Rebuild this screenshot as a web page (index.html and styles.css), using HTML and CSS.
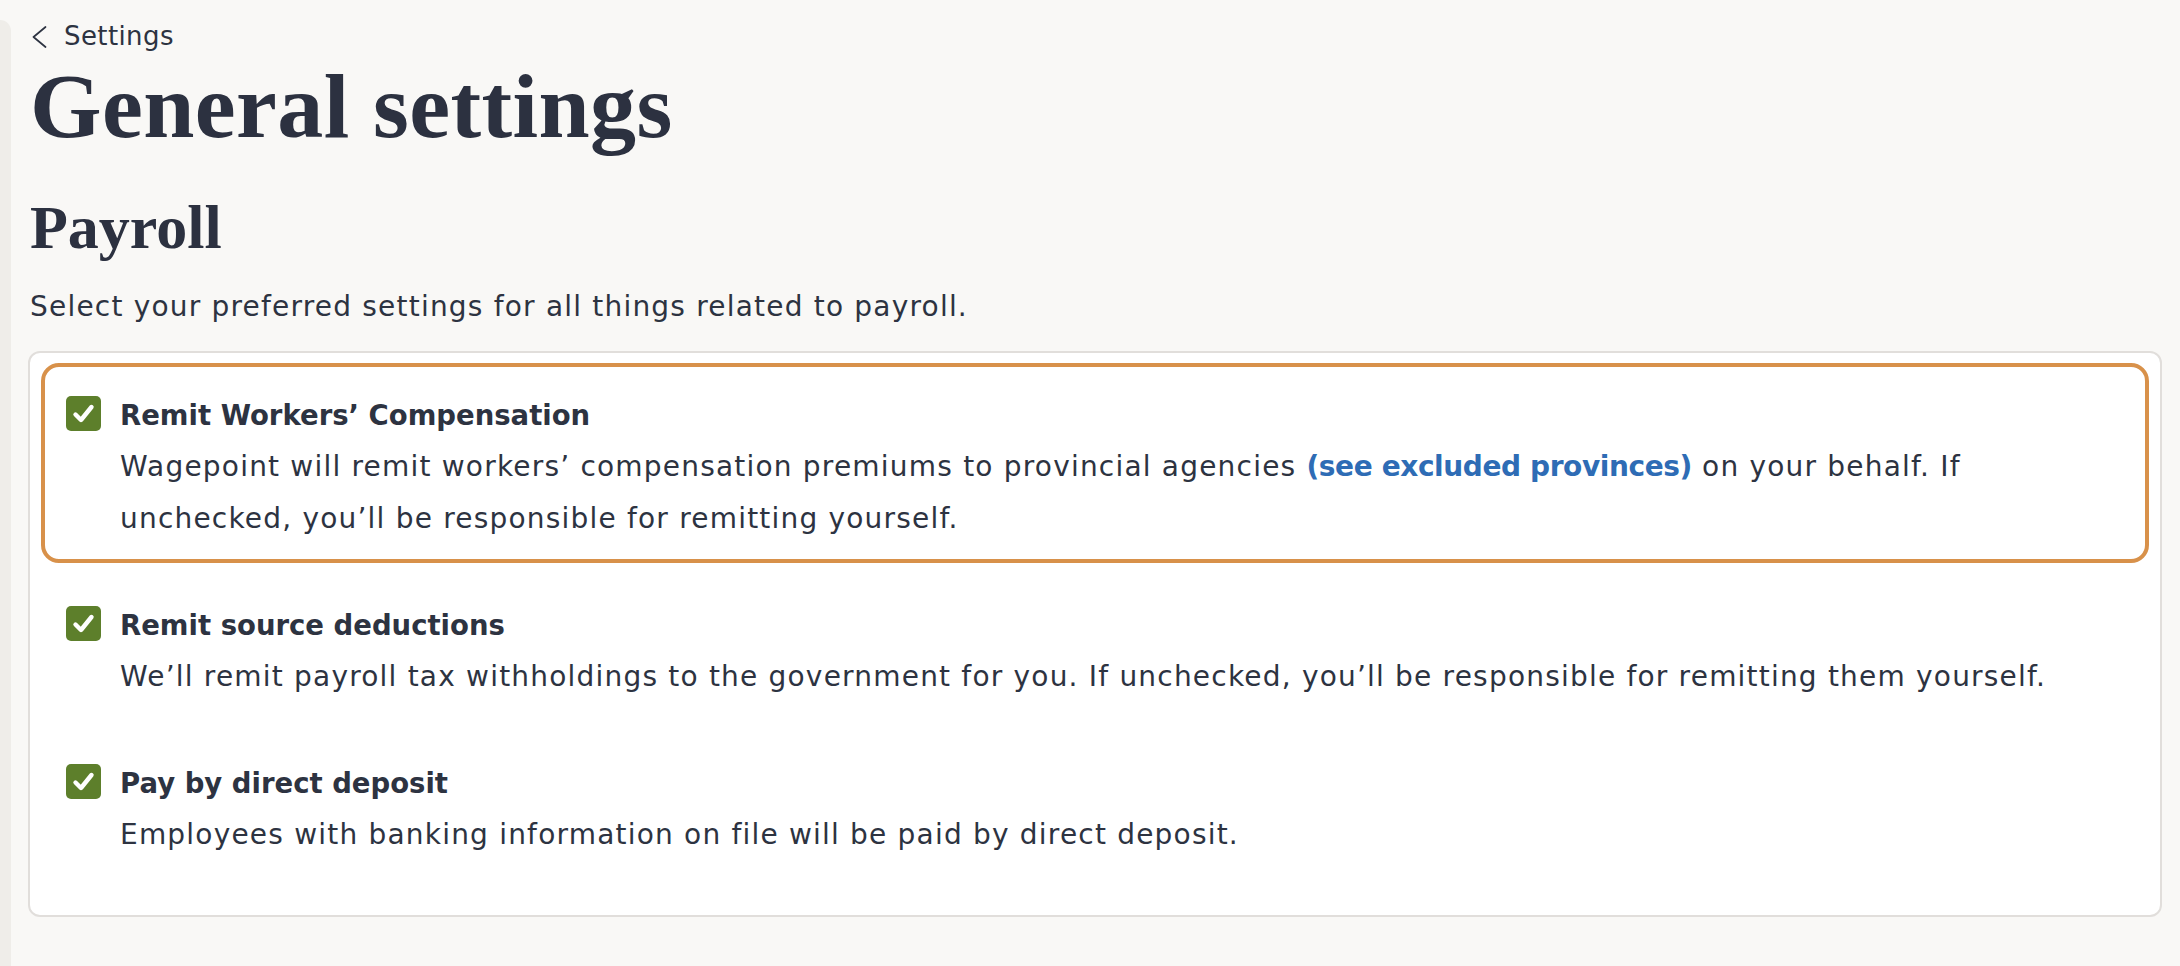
FILE: index.html
```html
<!DOCTYPE html>
<html lang="en">
<head>
<meta charset="utf-8">
<title>General settings</title>
<link rel="stylesheet" href="styles.css">
</head>
<body>
<div class="layout">
  <aside class="sidebar"></aside>
  <main class="main">
    <a class="back" href="#">
      <svg class="back-icon" viewBox="0 0 15 22" width="15" height="22" aria-hidden="true">
        <path d="M13.5 1 L1.5 11 L13.5 21" fill="none" stroke="#2d3341" stroke-width="1.7" stroke-linecap="round" stroke-linejoin="round"/>
      </svg>
      <span>Settings</span>
    </a>
    <h1 class="page-title">General settings</h1>
    <h2 class="section-title">Payroll</h2>
    <p class="section-desc">Select your preferred settings for all things related to payroll.</p>
    <div class="card">
      <div class="option option-focused">
        <span class="checkbox"><svg viewBox="0 0 35 35" width="35" height="35"><path d="M9.5 18.5 L15 24 L25.5 11" fill="none" stroke="#fff" stroke-width="4.4" stroke-linecap="round" stroke-linejoin="round"/></svg></span>
        <div class="option-text">
          <div class="option-title">Remit Workers’ Compensation</div>
          <div class="option-desc">Wagepoint will remit workers’ compensation premiums to provincial agencies <a class="link" href="#">(see excluded provinces)</a> on your behalf. If unchecked, you’ll be responsible for remitting yourself.</div>
        </div>
      </div>
      <div class="option">
        <span class="checkbox"><svg viewBox="0 0 35 35" width="35" height="35"><path d="M9.5 18.5 L15 24 L25.5 11" fill="none" stroke="#fff" stroke-width="4.4" stroke-linecap="round" stroke-linejoin="round"/></svg></span>
        <div class="option-text">
          <div class="option-title">Remit source deductions</div>
          <div class="option-desc">We’ll remit payroll tax withholdings to the government for you. If unchecked, you’ll be responsible for remitting them yourself.</div>
        </div>
      </div>
      <div class="option">
        <span class="checkbox"><svg viewBox="0 0 35 35" width="35" height="35"><path d="M9.5 18.5 L15 24 L25.5 11" fill="none" stroke="#fff" stroke-width="4.4" stroke-linecap="round" stroke-linejoin="round"/></svg></span>
        <div class="option-text">
          <div class="option-title">Pay by direct deposit</div>
          <div class="option-desc">Employees with banking information on file will be paid by direct deposit.</div>
        </div>
      </div>
    </div>
  </main>
</div>
</body>
</html>
```

FILE: styles.css
```css
* { box-sizing: border-box; }

html, body {
  margin: 0;
  padding: 0;
  height: 100%;
}

body {
  background: #f9f8f6;
  color: #2d3341;
  font-family: "DejaVu Sans", "Lato", sans-serif;
}

.layout {
  display: flex;
  min-height: 100vh;
}

.sidebar {
  flex: 0 0 11px;
  margin-top: 20px;
  background: #efede9;
  border-top-right-radius: 12px;
}

.main {
  flex: 1;
  padding: 16px 18px 0 17px;
  display: flex;
  flex-direction: column;
  align-items: stretch;
}

.back {
  display: flex;
  align-items: center;
  gap: 17px;
  height: 40px;
  padding-left: 4px;
  color: #2d3341;
  text-decoration: none;
  font-size: 26px;
  letter-spacing: 0.4px;
  line-height: 40px;
  align-self: flex-start;
}

.back-icon {
  display: block;
  margin-top: 1px;
}

.page-title {
  margin: 0;
  font-family: "Liberation Serif", "Times New Roman", serif;
  font-weight: 700;
  font-size: 92px;
  line-height: 101px;
  letter-spacing: 0.4px;
  padding-left: 2px;
  color: #2c3140;
}

.section-title {
  margin: 33px 0 0;
  font-family: "Liberation Serif", "Times New Roman", serif;
  font-weight: 700;
  font-size: 62px;
  line-height: 74px;
  padding-left: 2px;
  color: #2c3140;
}

.section-desc {
  margin: 23px 0 0;
  font-size: 28px;
  letter-spacing: 1.2px;
  line-height: 40px;
  padding-left: 2px;
}

.card {
  margin-top: 24px;
  background: #ffffff;
  border: 2px solid #e1dedb;
  border-radius: 12px;
  padding: 10px 11px 36px;
  display: flex;
  flex-direction: column;
  gap: 10px;
}

.option {
  display: flex;
  align-items: flex-start;
  gap: 19px;
  padding: 22px 21px 14px 21px;
  border: 4px solid transparent;
  border-radius: 18px;
}

.option-focused {
  border-color: #d8914a;
}

.checkbox {
  flex: 0 0 35px;
  width: 35px;
  height: 35px;
  margin-top: 7px;
  background: #5d7f2b;
  border-radius: 5px;
  display: flex;
}

.checkbox svg {
  display: block;
}

.option-text {
  flex: 1;
  min-width: 0;
}

.option-title {
  font-size: 27.5px;
  font-weight: 700;
  line-height: 52px;
}

.option-desc {
  font-size: 28px;
  letter-spacing: 1.2px;
  line-height: 52px;
}

.link {
  color: #2e6cb5;
  font-weight: 700;
  letter-spacing: -0.4px;
  text-decoration: none;
}
```
